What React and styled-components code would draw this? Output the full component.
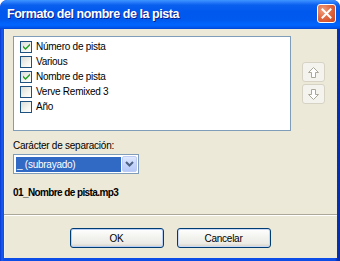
import React from "react";
import styled, { createGlobalStyle } from "styled-components";

const Global = createGlobalStyle`
  html, body { margin: 0; padding: 0; background: #fff; }
  body { font-family: "Liberation Sans", Arial, sans-serif; font-size: 10px; letter-spacing: -0.25px; }
`;

const Window = styled.div`
  width: 340px;
  height: 261px;
  box-sizing: border-box;
  display: flex;
  flex-direction: column;
  border-radius: 7px 7px 0 0;
  padding: 0 3px 3px 4px;
  overflow: hidden;
  background: linear-gradient(90deg, #0838d0 0px, #1a5cf0 2px, #0b4de6 4px, #0b4de6 335px, #0832b8 337px, #0a2aa0 340px);
`;

const TitleBar = styled.div`
  height: 29px;
  flex: 0 0 29px;
  margin: 0 -3px 0 -4px;
  display: flex;
  align-items: center;
  justify-content: space-between;
  padding: 0 4px 0 7px;
  border-radius: 7px 7px 0 0;
  background: linear-gradient(
    180deg,
    #3d95ff 0px,
    #2c7ffc 2px,
    #0a5fee 5px,
    #0058ee 12px,
    #005aef 20px,
    #0066ff 25px,
    #0052e8 28px,
    #0042d0 29px
  );
`;

const Title = styled.span`
  color: #fff;
  font-family: "Liberation Sans", Arial, sans-serif;
  font-weight: bold;
  font-size: 12.5px;
  letter-spacing: -0.45px;
  text-shadow: 1px 1px 0 #0a1e8c;
  margin-top: -1px;
`;

const CloseButton = styled.div`
  width: 19px;
  height: 19px;
  box-sizing: border-box;
  border: 1px solid #fff;
  border-radius: 3px;
  background: radial-gradient(circle at 30% 30%, #f0a080 0%, #e06a44 45%, #c9451e 100%);
  display: flex;
  align-items: center;
  justify-content: center;
  margin-top: -2px;
`;

const Client = styled.div`
  flex: 1;
  background: #ece9d8;
  box-shadow: inset 1px 0 0 #f4f2e8;
  display: flex;
  flex-direction: column;
  padding-top: 7px;
`;

const Section = styled.div`
  padding: 0 9px;
  display: flex;
  flex-direction: column;
`;

const TopRow = styled.div`
  display: flex;
  align-items: flex-start;
  gap: 11px;
`;

const ListBox = styled.div`
  width: 278px;
  height: 95px;
  box-sizing: border-box;
  border: 1px solid #7f9db9;
  background: #fff;
  padding: 2px 0 0 6px;
  display: flex;
  flex-direction: column;
`;

const Row = styled.div`
  height: 15px;
  flex: 0 0 15px;
  display: flex;
  align-items: center;
  gap: 4px;
  color: #000;
`;

const Box = styled.span`
  width: 12px;
  height: 12px;
  box-sizing: border-box;
  border: 1px solid #1c5180;
  background: linear-gradient(135deg, #dcdcd7 0%, #f4f4f0 60%, #ffffff 100%);
  display: flex;
  align-items: center;
  justify-content: center;
`;

const Side = styled.div`
  display: flex;
  flex-direction: column;
  gap: 2px;
  padding-top: 26px;
`;

const ArrowButton = styled.div`
  width: 23px;
  height: 20px;
  box-sizing: border-box;
  border: 1px solid #d6d3c5;
  border-radius: 3px;
  background: #f4f3ee;
  display: flex;
  align-items: center;
  justify-content: center;
`;

const Label = styled.div`
  margin-top: 8px;
  height: 13px;
  line-height: 13px;
  color: #000;
`;

const Combo = styled.div`
  margin-top: 2px;
  width: 126px;
  height: 20px;
  box-sizing: border-box;
  border: 1px solid #7f9db9;
  background: #fff;
  display: flex;
  align-items: stretch;
  padding: 2px 1px 1px 2px;
  gap: 1px;
`;

const Selected = styled.div`
  flex: 1;
  background: #316ac5;
  color: #fff;
  display: flex;
  align-items: center;
  padding-left: 1px;
`;

const DropButton = styled.div`
  width: 15px;
  margin-top: -1px;
  box-sizing: border-box;
  border: 1px solid #bccbf4;
  border-radius: 2px;
  background: linear-gradient(180deg, #dfe8fd 0%, #c6d6fb 50%, #b5c9f7 100%);
  display: flex;
  align-items: center;
  justify-content: center;
`;

const FileName = styled.div`
  margin-top: 12px;
  height: 14px;
  line-height: 14px;
  font-weight: bold;
  letter-spacing: -0.6px;
  color: #000;
`;

const Separator = styled.div`
  margin-top: 14px;
  height: 1px;
  background: #aca899;
  border-bottom: 1px solid #fff;
`;

const Buttons = styled.div`
  margin-top: 12px;
  display: flex;
  justify-content: center;
  gap: 13px;
  padding-right: 1px;
`;

const Button = styled.div`
  width: 94px;
  height: 20px;
  box-sizing: border-box;
  border: 1px solid #003c74;
  border-radius: 3px;
  background: linear-gradient(180deg, #ffffff 0%, #f4f4f0 40%, #ecebe6 80%, #d6d0c5 100%);
  box-shadow: inset 0 0 0 1px ${(p) => (p.$default ? "#b6cdf5" : "#c9d9f5")};
  display: flex;
  align-items: center;
  justify-content: center;
  color: #000;
`;

const Check = () => (
  <svg width="9" height="9" viewBox="0 0 9 9">
    <path d="M1 3.5 L3.5 6 L8 1.5 L8 3.5 L3.5 8 L1 5.5 Z" fill="#21a121" />
  </svg>
);

const UpArrow = ({ down }) => (
  <svg width="11" height="11" viewBox="0 0 11 11" style={down ? { transform: "rotate(180deg)" } : undefined}>
    <path d="M5.5 0.5 L10.5 5.5 L7.5 5.5 L7.5 10.5 L3.5 10.5 L3.5 5.5 L0.5 5.5 Z" fill="#fff" stroke="#aca899" strokeWidth="1" />
  </svg>
);

const items = [
  { label: "Número de pista", checked: true },
  { label: "Various", checked: false },
  { label: "Nombre de pista", checked: true },
  { label: "Verve Remixed 3", checked: false },
  { label: "Año", checked: false },
];

export default function App() {
  return (
    <>
      <Global />
      <Window>
        <TitleBar>
          <Title>Formato del nombre de la pista</Title>
          <CloseButton>
            <svg width="11" height="11" viewBox="0 0 11 11">
              <path d="M1.5 1.5 L9.5 9.5 M9.5 1.5 L1.5 9.5" stroke="#fff" strokeWidth="2" strokeLinecap="square" />
            </svg>
          </CloseButton>
        </TitleBar>
        <Client>
          <Section>
            <TopRow>
              <ListBox>
                {items.map((it) => (
                  <Row key={it.label}>
                    <Box>{it.checked && <Check />}</Box>
                    <span>{it.label}</span>
                  </Row>
                ))}
              </ListBox>
              <Side>
                <ArrowButton>
                  <UpArrow />
                </ArrowButton>
                <ArrowButton>
                  <UpArrow down />
                </ArrowButton>
              </Side>
            </TopRow>
            <Label>Carácter de separación:</Label>
            <Combo>
              <Selected>_ (subrayado)</Selected>
              <DropButton>
                <svg width="9" height="6" viewBox="0 0 9 6">
                  <path d="M1 1 L4.5 4.5 L8 1" fill="none" stroke="#4d6185" strokeWidth="2" />
                </svg>
              </DropButton>
            </Combo>
            <FileName>01_Nombre de pista.mp3</FileName>
          </Section>
          <Separator />
          <Buttons>
            <Button $default>OK</Button>
            <Button>Cancelar</Button>
          </Buttons>
        </Client>
      </Window>
    </>
  );
}
